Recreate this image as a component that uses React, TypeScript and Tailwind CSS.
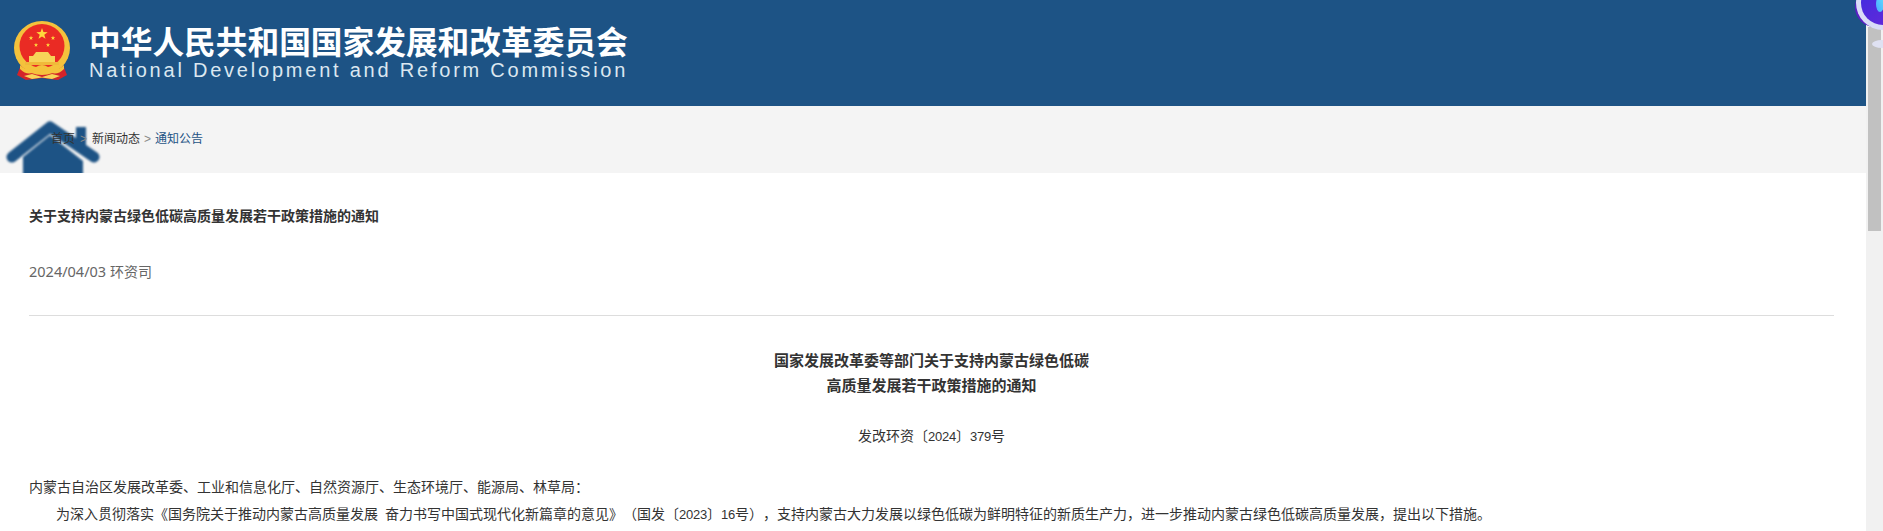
const cjk = "font-['Liberation_Sans','Noto_Sans_CJK_SC',sans-serif]";

function Star({ x, y, r, fill = "#ffd83c" }: { x: number; y: number; r: number; fill?: string }) {
  const pts: string[] = [];
  for (let i = 0; i < 10; i++) {
    const a = -Math.PI / 2 + (i * Math.PI) / 5;
    const d = i % 2 === 0 ? r : r * 0.4;
    pts.push(`${x + d * Math.cos(a)},${y + d * Math.sin(a)}`);
  }
  return <polygon points={pts.join(" ")} fill={fill} />;
}

function Emblem() {
  return (
    <svg width="56" height="60" viewBox="0 0 56 60" className="shrink-0 blur-[0.4px]">
      <path d="M7 44 L3 54 L12 59 L28 57 L44 59 L53 54 L49 44 Z" fill="#d3232a" />
      <ellipse cx="28" cy="27" rx="28" ry="27" fill="#f4c23c" />
      <ellipse cx="28" cy="25" rx="22.5" ry="22" fill="#ea2b24" />
      <Star x={28} y={13} r={6} />
      <Star x={17} y={17} r={2.4} />
      <Star x={39} y={17} r={2.4} />
      <Star x={22} y={24} r={2.2} />
      <Star x={34} y={24} r={2.2} />
      <path d="M22 31 H34 L37 35 H19 Z" fill="#f7d458" />
      <rect x="15" y="35" width="26" height="6" fill="#f7d458" />
      <rect x="11" y="41" width="34" height="3" fill="#f0b93a" />
      <path d="M6 44 Q14 52 22 46 Q28 42 34 46 Q42 52 50 44 L50 48 Q42 56 34 50 Q28 46 22 50 Q14 56 6 48 Z" fill="#f4c23c" />
      <path d="M10 55 L18 53 L28 56 L38 53 L46 55 L38 58 L28 56.5 L18 58 Z" fill="#f7d458" />
    </svg>
  );
}

function House() {
  return (
    <div className="absolute left-[2px] top-[11px] h-[56px] w-[102px] overflow-hidden">
      <svg width="102" height="60" viewBox="0 0 102 60" className="blur-[1px]">
        <rect x="74" y="10" width="10" height="24" fill="#1d5385" />
        <path d="M21 60 V40 L48 18 L81 44 V60 Z" fill="#1d5385" />
        <path d="M10 40 L48 10 L92 40" fill="none" stroke="#1d5385" strokeWidth="11" strokeLinecap="round" strokeLinejoin="round" />
        <path d="M19 40 L48 18 L84 42" fill="none" stroke="#f4f4f4" strokeWidth="1" opacity="0.5" />
      </svg>
    </div>
  );
}

function Digits({ children }: { children: string }) {
  return <span className="font-['Liberation_Sans',sans-serif] text-[13px] tracking-[-0.23px]">{children}</span>;
}

function Widget() {
  return (
    <div className="absolute right-0 top-0 h-[50px] w-[33px] overflow-hidden">
      <svg width="33" height="50" viewBox="0 0 33 50" className="blur-[0.4px]">
        <defs>
          <linearGradient id="wg" x1="0" y1="0" x2="1" y2="1">
            <stop offset="0" stopColor="#3c2ce0" />
            <stop offset="1" stopColor="#6a28d8" />
          </linearGradient>
          <linearGradient id="cy" x1="0" y1="1" x2="1" y2="0">
            <stop offset="0" stopColor="#4aa8ff" />
            <stop offset="1" stopColor="#5fe0ff" />
          </linearGradient>
        </defs>
        <ellipse cx="32" cy="44" rx="10" ry="4" fill="#dfe1f2" />
        <circle cx="25" cy="7" r="20" fill="#5b1fc4" />
        <circle cx="33" cy="3" r="27" fill="#d9dcf7" />
        <circle cx="33" cy="3" r="22" fill="url(#wg)" />
        <ellipse cx="30" cy="4" rx="4" ry="8" fill="url(#cy)" />
      </svg>
    </div>
  );
}

export default function App() {
  return (
    <div className={`relative flex h-[531px] w-full overflow-hidden bg-white text-[14px] text-[#333333] [text-spacing-trim:space-all] ${cjk}`}>
      <div className="flex min-w-0 flex-1 flex-col">
        <header className="flex h-[106px] shrink-0 items-start gap-[19px] bg-[#1d5385] pl-[14px] pt-[21px]">
          <Emblem />
          <div className="mt-[4px] flex w-[540px] flex-col">
            <div className="whitespace-nowrap text-[31.7px] font-bold leading-[36px] text-white">
              中华人民共和国国家发展和改革委员会
            </div>
            <div className="whitespace-nowrap font-['Liberation_Sans',sans-serif] text-[20px] leading-[18px] tracking-[2.78px] text-[#dbe7f0]">
              National Development and Reform Commission
            </div>
          </div>
        </header>

        <nav className="relative flex h-[67px] shrink-0 items-center bg-[#f4f4f4] pb-[2px] pl-[51px] text-[12px]">
          <House />
          <span className="relative">首页</span>
          <span className="relative mx-[5px] text-[#888888]">&gt;</span>
          <span className="relative">新闻动态</span>
          <span className="relative mx-[4px] text-[#888888]">&gt;</span>
          <span className="relative text-[#1d5385]">通知公告</span>
        </nav>

        <main className="pl-[29px] pr-[32px]">
          <h1 className="pt-[31px] font-bold leading-[24px]">关于支持内蒙古绿色低碳高质量发展若干政策措施的通知</h1>
          <p className="mt-[31px] leading-[24px] text-[#666666]">
            <span className="font-['Noto_Sans',sans-serif] text-[14.5px]">2024/04/03 </span>环资司
          </p>
          <hr className="mt-[31px] border-t border-[#dddddd]" />
          <h2 className="mt-[32px] text-center text-[15px] font-bold leading-[25px]">
            国家发展改革委等部门关于支持内蒙古绿色低碳
            <br />
            高质量发展若干政策措施的通知
          </h2>
          <p className="mt-[26px] text-center leading-[25px]">
            发改环资〔<Digits>2024</Digits>〕<Digits>379</Digits>号
          </p>
          <p className="mt-[25px] leading-[27px]">内蒙古自治区发展改革委、工业和信息化厅、自然资源厅、生态环境厅、能源局、林草局：</p>
          <p className="indent-[27px] leading-[27px]">
            为深入贯彻落实《国务院关于推动内蒙古高质量发展{"\u2002"}奋力书写中国式现代化新篇章的意见》（国发〔<Digits>2023</Digits>〕<Digits>16</Digits>号），支持内蒙古大力发展以绿色低碳为鲜明特征的新质生产力，进一步推动内蒙古绿色低碳高质量发展，提出以下措施。
          </p>
        </main>
      </div>

      <div className="w-[17px] shrink-0 bg-[#f1f1f1] px-[2px] pt-[27px]">
        <div className="h-[204px] bg-[#c1c1c1]" />
      </div>

      <Widget />
    </div>
  );
}
